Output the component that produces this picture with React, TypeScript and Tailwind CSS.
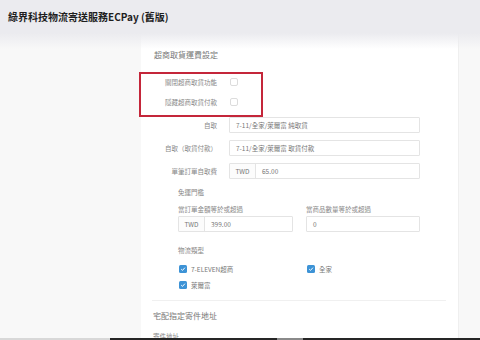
const font = { fontFamily: '"Noto Sans CJK TC", "Noto Sans", sans-serif' };

function Check({ checked }: { checked?: boolean }) {
  if (checked) {
    return (
      <span className="block w-[8px] h-[8px] rounded-[1.5px] bg-[#3d93d6] flex items-center justify-center shrink-0">
        <svg width="6" height="6" viewBox="0 0 10 10" className="block">
          <path d="M2 5.2 L4.2 7.3 L8.2 2.8" stroke="white" strokeWidth="1.6" fill="none" />
        </svg>
      </span>
    );
  }
  return <span className="block w-[8px] h-[8px] rounded-[2px] border border-[#dcdcdc] bg-white shrink-0" />;
}

function Row({ label, children }: { label: string; children: React.ReactNode }) {
  return (
    <div className="flex items-center gap-[12px] h-[12px]">
      <div className="w-[76px] text-right text-[6.5px] text-[#888] leading-[12px] shrink-0">{label}</div>
      {children}
    </div>
  );
}

function Input({ text, addon, w }: { text: string; addon?: string; w: string }) {
  return (
    <div className={`${w} h-[16px] border border-[#e4e4e4] rounded-[1px] flex items-center text-[6.5px] leading-[12px] text-[#777] bg-white`}>
      {addon && (
        <div className="h-full w-[26px] border-r border-[#e4e4e4] flex items-center justify-center bg-[#fcfcfc]">{addon}</div>
      )}
      <div className="pl-[6px]">{text}</div>
    </div>
  );
}

export default function App() {
  return (
    <div className="relative w-[480px] h-[340px] overflow-hidden bg-[#f8f8f8] text-[6.5px] leading-[12px]" style={font}>
      <div className="h-[33px] bg-[#ebebef] flex items-center pl-[8px]">
        <h1 className="text-[10px] leading-[14px] font-bold text-[#1e1e1e]">綠界科技物流寄送服務ECPay (舊版)</h1>
      </div>
      <div className="flex pl-[141px]">
        <div className="w-[318px] h-[320px] bg-white border-r border-[#efefef] pt-[16px]">
          <div className="pl-[13px] text-[8px] leading-[12px] text-[#777]">超商取貨運費設定</div>
          <div className="mt-[15px] flex flex-col gap-[8px]">
            <Row label="關閉超商取貨功能">
              <span className="block ml-[1px]"><Check /></span>
            </Row>
            <Row label="隱藏超商取貨付款">
              <span className="block ml-[1px]"><Check /></span>
            </Row>
          </div>
          <div className="mt-[9px] flex flex-col gap-[7px]">
            <div className="flex items-center gap-[12px]">
              <div className="w-[76px] text-right text-[#888] shrink-0">自取</div>
              <Input w="w-[191px]" text="7-11/全家/萊爾富 純取貨" />
            </div>
            <div className="flex items-center gap-[12px]">
              <div className="w-[76px] text-right text-[#888] shrink-0">自取（取貨付款）</div>
              <Input w="w-[191px]" text="7-11/全家/萊爾富 取貨付款" />
            </div>
            <div className="flex items-center gap-[12px]">
              <div className="w-[76px] text-right text-[#888] shrink-0">單筆訂單自取費</div>
              <Input w="w-[191px]" addon="TWD" text="65.00" />
            </div>
          </div>
          <div className="pl-[37px]">
            <div className="mt-[7px] text-[#888]">免運門檻</div>
            <div className="mt-[5px] flex gap-[13px]">
              <div>
                <div className="text-[#888]">當訂單金額等於或超過</div>
                <div className="mt-[1px]">
                  <Input w="w-[115px]" addon="TWD" text="399.00" />
                </div>
              </div>
              <div>
                <div className="text-[#888]">當商品數量等於或超過</div>
                <div className="mt-[1px]">
                  <Input w="w-[114px]" text="0" />
                </div>
              </div>
            </div>
            <div className="mt-[12px] text-[#888]">物流類型</div>
            <div className="mt-[7px] grid grid-cols-[128px_1fr] gap-y-[4px] text-[#777]">
              <div className="flex items-center gap-[4px] pl-[1px] h-[12px]"><Check checked />7-ELEVEN超商</div>
              <div className="flex items-center gap-[4px] pl-[1px] h-[12px]"><Check checked />全家</div>
              <div className="flex items-center gap-[4px] pl-[1px] h-[12px]"><Check checked />萊爾富</div>
            </div>
          </div>
          <div className="mt-[9px] ml-[11px] mr-[12px] h-px bg-[#f0f0f0]" />
          <div className="mt-[9px] pl-[12px] text-[8px] leading-[12px] text-[#777]">宅配指定寄件地址</div>
          <div className="mt-[8px] pl-[12px] text-[#888]">寄件地址</div>
        </div>
      </div>
      <div className="pointer-events-none absolute left-0 top-[33px] w-full h-[16px] bg-gradient-to-b from-[#ebebef] to-transparent" />
      <div className="pointer-events-none absolute left-[139px] top-[72px] w-[124px] h-[45px] border-2 border-[#c4263a]" />
      <div className="absolute left-0 bottom-0 w-full h-[2px] flex">
        <div className="w-[110px] bg-[#d8d8d8]" />
        <div className="w-[167px] bg-[#262626]" />
        <div className="w-[26px] bg-[#8a8a8a]" />
        <div className="flex-1 bg-[#262626]" />
      </div>
    </div>
  );
}
